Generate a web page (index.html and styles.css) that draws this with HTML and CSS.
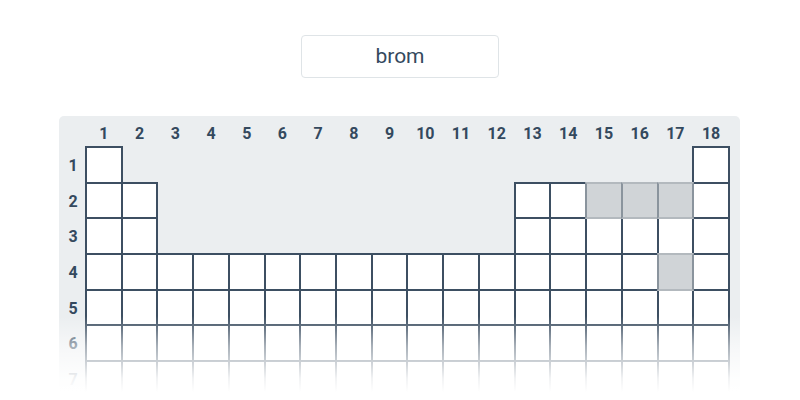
FILE: index.html
```html
<!DOCTYPE html>
<html>
<head>
<meta charset="utf-8">
<link rel="stylesheet" href="styles.css">
</head>
<body>
<div class="top">
  <div class="search">brom</div>
</div>
<div class="panel">
  <div class="table" id="table"></div>
  <div class="fade"></div>
</div>
<script src="script.js"></script>
</body>
</html>
```
FILE: script.js
```js
(function () {
  var t = document.getElementById('table');
  var html = '<div class="corner"></div>';
  for (var c = 1; c <= 18; c++) html += '<div class="colh" style="grid-column:' + (c + 1) + '">' + c + '</div>';
  var gray = { '2-15': 1, '2-16': 1, '2-17': 1, '4-17': 1 };
  for (var r = 1; r <= 7; r++) {
    html += '<div class="rowh" style="grid-row:' + (r + 1) + '">' + r + '</div>';
    for (var c = 1; c <= 18; c++) {
      var show = false;
      if (r === 1) show = (c === 1 || c === 18);
      else if (r <= 3) show = (c <= 2 || c >= 13);
      else show = true;
      if (!show) continue;
      var cls = gray[r + '-' + c] ? 'cell gray' : 'cell';
      html += '<div class="' + cls + '" style="grid-row:' + (r + 1) + ';grid-column:' + (c + 1) + '"></div>';
    }
  }
  t.innerHTML = html;
})();
```
FILE: styles.css
```css
html, body {
  margin: 0;
  padding: 0;
  background: #ffffff;
  font-family: Roboto, "Liberation Sans", sans-serif;
  overflow: hidden;
}
.top {
  display: flex;
  justify-content: center;
  padding-top: 35px;
}
.search {
  box-sizing: border-box;
  width: 198px;
  height: 43px;
  border: 1px solid #dfe4e7;
  border-radius: 4px;
  display: flex;
  align-items: center;
  justify-content: center;
  font-size: 21px;
  color: #34495e;
  padding-bottom: 1px;
}
.panel {
  position: relative;
  margin: 38px 0 0 59px;
  width: 681px;
  height: 290px;
  background: #ebeef0;
  border-radius: 5px 5px 0 0;
  overflow: hidden;
}
.table {
  display: grid;
  grid-template-columns: 27px repeat(18, 35.72px);
  grid-template-rows: 31px repeat(7, 35.7px);
}
.corner {
  grid-row: 1;
  grid-column: 1;
}
.colh {
  grid-row: 1;
  display: flex;
  align-items: center;
  justify-content: center;
  font-weight: 700;
  font-size: 16px;
  color: #34495e;
  padding-top: 4px;
}
.rowh {
  grid-column: 1;
  display: flex;
  align-items: center;
  justify-content: center;
  font-weight: 700;
  font-size: 16px;
  color: #34495e;
  padding-left: 1px;
  padding-top: 1px;
}
.cell {
  background: #ffffff;
  border: 2px solid #3d4f62;
  margin: -1px;
}
.cell.gray {
  position: relative;
  z-index: 1;
  background: #d0d4d7;
  border-color: #b3b9be #8a949d;
}
.fade {
  position: absolute;
  left: 0;
  right: 0;
  top: 200px;
  height: 90px;
  z-index: 2;
  background: linear-gradient(to bottom, rgba(255,255,255,0) 0px, rgba(255,255,255,0.55) 30px, rgba(255,255,255,0.93) 62px, #ffffff 76px);
}
```
